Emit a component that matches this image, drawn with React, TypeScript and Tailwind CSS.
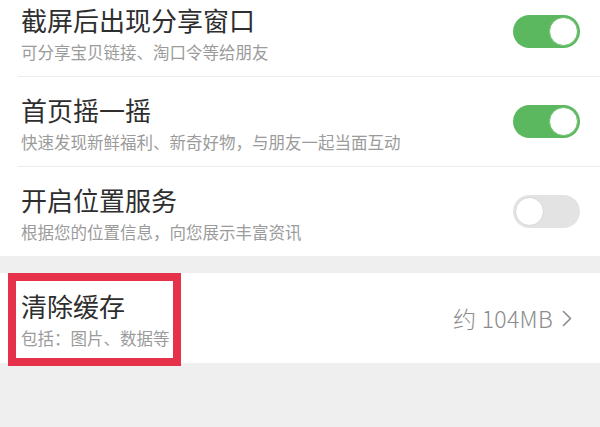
const FONT = "font-['Noto_Sans_CJK_SC','Noto_Sans',sans-serif]";

function Toggle({ on }: { on: boolean }) {
  if (on) {
    return (
      <div className="w-[67px] h-[33px] rounded-full bg-[#5cb85f] flex items-center justify-end pr-[2px] shrink-0">
        <div className="w-[29px] h-[29px] rounded-full bg-white border border-[#6fc070]" />
      </div>
    );
  }
  return (
    <div className="w-[67px] h-[33px] rounded-full bg-[#e3e3e3] flex items-center justify-start pl-[2px] shrink-0">
      <div className="w-[29px] h-[29px] rounded-full bg-white border border-[#d6d6d6]" />
    </div>
  );
}

function SettingRow({ title, desc, on }: { title: string; desc: string; on: boolean }) {
  return (
    <div className="h-[89px] flex items-center pl-[21px] pr-[20px]">
      <div className="flex-1 flex flex-col mt-[4px]">
        <div className="text-[26px] leading-[26px] text-[#2e2e2e]">{title}</div>
        <div className="mt-[11px] text-[16.5px] leading-[17px] text-[#9b9b9b]">{desc}</div>
      </div>
      <Toggle on={on} />
    </div>
  );
}

export default function App() {
  return (
    <div className={`w-[600px] h-[427px] overflow-hidden bg-[#efefef] relative ${FONT}`}>
      <div className="bg-white -mt-[13px]">
        <SettingRow title="截屏后出现分享窗口" desc="可分享宝贝链接、淘口令等给朋友" on />
        <div className="ml-[18px] h-px bg-[#ededed]" />
        <SettingRow title="首页摇一摇" desc="快速发现新鲜福利、新奇好物，与朋友一起当面互动" on />
        <div className="ml-[18px] h-px bg-[#ededed]" />
        <div className="-mb-px">
          <SettingRow title="开启位置服务" desc="根据您的位置信息，向您展示丰富资讯" on={false} />
        </div>
      </div>

      <div className="mt-[18px] bg-white h-[90px] flex items-center pl-[21px] pr-[28px]">
        <div className="flex-1 flex flex-col mt-[4px]">
          <div className="text-[26px] leading-[26px] text-[#2e2e2e]">清除缓存</div>
          <div className="mt-[11px] text-[16.5px] leading-[17px] text-[#9b9b9b]">包括：图片、数据等</div>
        </div>
        <div className="flex items-center gap-[9px] text-[23px] text-[#8c8c8c] font-light">
          <span className="tracking-[0.3px]">约 104MB</span>
          <svg width="10" height="17" viewBox="0 0 10 17" fill="none">
            <path d="M1.5 1.5 L8.5 8.5 L1.5 15.5" stroke="#8c8c8c" strokeWidth="1.6" strokeLinecap="round" strokeLinejoin="round" />
          </svg>
        </div>
      </div>

      <div className="absolute left-[8px] top-[273px] w-[173px] h-[93px] border-[8px] border-[#e5324a]" />
    </div>
  );
}
